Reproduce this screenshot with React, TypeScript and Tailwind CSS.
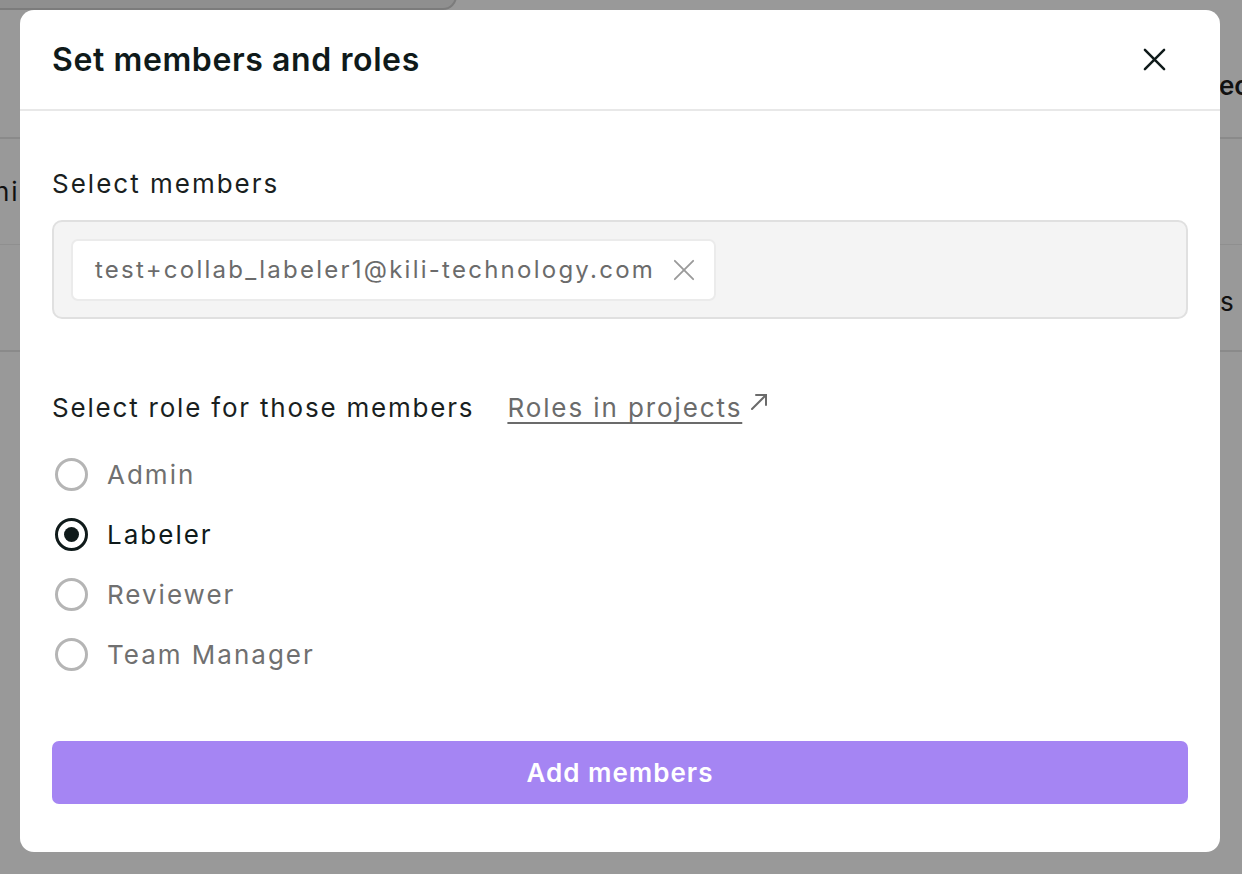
import { useState } from "react";

const roles = ["Admin", "Labeler", "Reviewer", "Team Manager"];

function CrossIcon({ className, stroke }: { className?: string; stroke: number }) {
  return (
    <svg viewBox="0 0 24 24" fill="none" stroke="currentColor" strokeWidth={stroke} strokeLinecap="round" className={className}>
      <path d="M2 2 22 22M22 2 2 22" />
    </svg>
  );
}

function Radio({ checked }: { checked: boolean }) {
  return (
    <span
      className={`flex h-[33px] w-[33px] shrink-0 items-center justify-center rounded-full border-[3px] ${
        checked ? "border-[#0f1a1a]" : "border-[#b5b5b5]"
      }`}
    >
      {checked && <span className="h-[15px] w-[15px] rounded-full bg-[#0f1a1a]" />}
    </span>
  );
}

// Page behind the dialog, dimmed by the backdrop
function BackdropPage() {
  return (
    <div className="pointer-events-none absolute inset-0">
      <div className="absolute left-[-20px] top-[-30px] h-[40px] w-[477px] rounded-[14px] border-2 border-[#7c7c7c] bg-[#8f8f8f]" />
      <div className="absolute left-0 right-0 top-[137px] h-[2px] bg-[#8a8a8a]" />
      <div className="absolute left-0 right-0 top-[244px] h-[1px] bg-[#8f8f8f]" />
      <div className="absolute left-0 right-0 top-[350px] h-[2px] bg-[#8a8a8a]" />
      <span className="absolute left-[-6px] top-[172px] text-[26px] tracking-[2px] text-[#111]">ni</span>
      <span className="absolute left-[1219px] top-[66px] text-[26px] font-semibold text-[#111]">ec</span>
      <span className="absolute left-[1220px] top-[282px] text-[26px] text-[#111]">s</span>
    </div>
  );
}

export default function App() {
  const [role, setRole] = useState("Labeler");

  return (
    <div
      className="relative h-[874px] w-full overflow-hidden bg-[#999999] pl-[20px] pt-[10px]"
      style={{ fontFamily: "Inter, 'Noto Sans', sans-serif" }}
    >
      <BackdropPage />

      <div className="relative flex h-[842px] w-[1200px] flex-col rounded-[14px] bg-white">
        {/* Header */}
        <div className="flex h-[101px] items-center justify-between border-b-2 border-[#e8e8e8] pl-[32px] pr-[54px]">
          <h2 className="text-[32px] font-semibold tracking-[0.6px] text-[#0f1a1a]">Set members and roles</h2>
          <CrossIcon className="h-[23px] w-[23px] text-[#0f1a1a]" stroke={2.6} />
        </div>

        {/* Body */}
        <div className="flex flex-1 flex-col px-[32px] pt-[55px]">
          <p className="text-[26px] leading-[36px] tracking-[2px] text-[#1a1f1f]">Select members</p>

          <div className="mt-[18px] flex h-[99px] items-center rounded-[10px] border-2 border-[#e0e0e0] bg-[#f4f4f4] px-[17px]">
            <div className="flex h-[62px] items-center gap-[18px] rounded-[7px] border-2 border-[#ebebeb] bg-white pl-[22px] pr-[19px]">
              <span className="text-[24px] tracking-[2.25px] text-[#6b6b6b]">test+collab_labeler1@kili-technology.com</span>
              <CrossIcon className="h-[22px] w-[22px] text-[#9a9a9a]" stroke={2} />
            </div>
          </div>

          <div className="mt-[69px] flex items-center gap-[33px]">
            <p className="text-[26px] leading-[36px] tracking-[1.8px] text-[#1a1f1f]">Select role for those members</p>
            <span className="flex items-center gap-[8px] text-[26px] tracking-[1.9px] text-[#6b6b6b]">
              <span className="underline decoration-[2px] underline-offset-[5px]">Roles in projects</span>
              <svg viewBox="0 0 18 18" fill="none" stroke="currentColor" strokeWidth={2} strokeLinecap="round" className="h-[18px] w-[18px] -translate-y-[6px]">
                <path d="M2 16 16 2M6 2h10v10" />
              </svg>
            </span>
          </div>

          <div className="mt-[17px] flex flex-col">
            {roles.map(r => (
              <button
                key={r}
                onClick={() => setRole(r)}
                className="flex h-[60px] items-center gap-[19px] pl-[3px] text-left"
              >
                <Radio checked={role === r} />
                <span className={`text-[26px] tracking-[2px] ${role === r ? "text-[#0f1a1a]" : "text-[#707070]"}`}>{r}</span>
              </button>
            ))}
          </div>

          <button className="mt-[57px] flex h-[63px] w-full items-center justify-center rounded-[7px] bg-[#a585f3] text-[26px] font-semibold tracking-[1px] text-white">
            Add members
          </button>
        </div>
      </div>
    </div>
  );
}
